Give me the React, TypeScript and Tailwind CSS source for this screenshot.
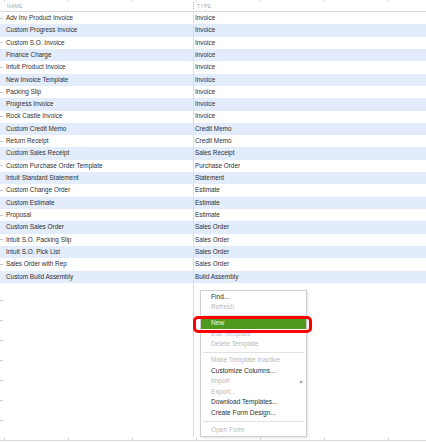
import React from "react";

interface FormTemplate {
  name: string;
  type: string;
}

const templates: FormTemplate[] = [
  { name: "Adv Inv Product Invoice", type: "Invoice" },
  { name: "Custom Progress Invoice", type: "Invoice" },
  { name: "Custom S.O. Invoice", type: "Invoice" },
  { name: "Finance Charge", type: "Invoice" },
  { name: "Intuit Product Invoice", type: "Invoice" },
  { name: "New Invoice Template", type: "Invoice" },
  { name: "Packing Slip", type: "Invoice" },
  { name: "Progress Invoice", type: "Invoice" },
  { name: "Rock Castle Invoice", type: "Invoice" },
  { name: "Custom Credit Memo", type: "Credit Memo" },
  { name: "Return Receipt", type: "Credit Memo" },
  { name: "Custom Sales Receipt", type: "Sales Receipt" },
  { name: "Custom Purchase Order Template", type: "Purchase Order" },
  { name: "Intuit Standard Statement", type: "Statement" },
  { name: "Custom Change Order", type: "Estimate" },
  { name: "Custom Estimate", type: "Estimate" },
  { name: "Proposal", type: "Estimate" },
  { name: "Custom Sales Order", type: "Sales Order" },
  { name: "Intuit S.O. Packing Slip", type: "Sales Order" },
  { name: "Intuit S.O. Pick List", type: "Sales Order" },
  { name: "Sales Order with Rep", type: "Sales Order" },
  { name: "Custom Build Assembly", type: "Build Assembly" },
];

type MenuEntry =
  | { kind: "item"; label: string; disabled?: boolean; active?: boolean; submenu?: boolean }
  | { kind: "sep"; tall?: boolean };

const menu: MenuEntry[] = [
  { kind: "item", label: "Find..." },
  { kind: "item", label: "Refresh", disabled: true },
  { kind: "sep" },
  { kind: "item", label: "New", active: true },
  { kind: "item", label: "Edit Template", disabled: true },
  { kind: "item", label: "Delete Template", disabled: true },
  { kind: "sep" },
  { kind: "item", label: "Make Template Inactive", disabled: true },
  { kind: "item", label: "Customize Columns..." },
  { kind: "item", label: "Import", disabled: true, submenu: true },
  { kind: "item", label: "Export...", disabled: true },
  { kind: "item", label: "Download Templates..." },
  { kind: "item", label: "Create Form Design..." },
  { kind: "sep", tall: true },
  { kind: "item", label: "Open Form", disabled: true },
];

const rulerTicks = [4, 68, 132, 196, 260, 324, 388];

const ContextMenu = () => (
  <div className="absolute left-[200px] top-[290px] w-[107px] h-[147px] bg-white border border-[#cfcfcf] shadow-[1px_1px_2px_rgba(0,0,0,0.12)] pt-[1px]">
    {menu.map((entry, i) =>
      entry.kind === "sep" ? (
        <div key={i} className={`flex items-center px-[2px] ${entry.tall ? "h-[6.5px]" : "h-[5.5px]"}`}>
          <div className="h-px w-full bg-[#e2e2e2]" />
        </div>
      ) : (
        <div
          key={i}
          className={`flex items-center justify-between h-[10.5px] pl-[10px] pr-[3px] text-[6.6px] leading-none ${
            entry.active
              ? "bg-[#4f9a1d] text-[#eef7e6]"
              : entry.disabled
              ? "text-[#b9b9b9]"
              : "text-[#2e2e2e]"
          }`}
        >
          <span>{entry.label}</span>
          {entry.submenu && <span className="text-[4px] text-[#999]">▶</span>}
        </div>
      )
    )}
  </div>
);

const App = () => {
  return (
    <div className="relative w-[426px] h-[442px] bg-white overflow-hidden font-['Liberation_Sans',Arial,sans-serif]">
      {/* top ruler */}
      <div className="absolute top-0 left-0 w-full h-[2px]">
        {rulerTicks.map((x) => (
          <div key={x} className="absolute top-0 w-px h-[2px] bg-[#d6d6d6]" style={{ left: x }} />
        ))}
      </div>

      {/* header */}
      <div className="flex h-[12px] border-b border-[#d9d9d9] text-[5px] tracking-[0.3px] text-[#a9a9a9]">
        <div className="w-[193px] pl-[7px] pt-[3px]">NAME</div>
        <div className="w-px my-[2px] border-l border-dotted border-[#b5b5b5]" />
        <div className="pl-[3px] pt-[3px]">TYPE</div>
      </div>

      {/* template rows */}
      <div className="flex flex-col">
        {templates.map((t, i) => (
          <div
            key={t.name}
            className={`flex h-[12.32px] items-center text-[6.4px] leading-none text-[#2f2f2f] ${
              i % 2 === 1 ? "bg-[#e2ecfa]" : "bg-white"
            }`}
          >
            <div className="flex items-center w-[193px]">
              <div className={`w-[3px] h-px ${i % 2 === 0 ? "bg-[#c8c8c8]" : ""}`} />
              <span className="pl-[3px]">{t.name}</span>
            </div>
            <div className="w-px self-stretch bg-[#dedede]" />
            <span className="pl-[1px]">{t.type}</span>
          </div>
        ))}
      </div>

      {/* empty area below the list */}
      <div className="flex h-[154px]">
        <div className="w-[193px] flex flex-col pt-[17px] gap-[19px]">
          {[0, 1, 2, 3, 4, 5, 6].map((n) => (
            <div key={n} className="w-[3px] h-px bg-[#d0d0d0]" />
          ))}
        </div>
        <div className="w-px bg-[#dcdcdc]" />
      </div>

      {/* bottom ruler */}
      <div className="relative h-[4px] border-b border-[#d6d6d6]">
        {rulerTicks.map((x) => (
          <div key={x} className="absolute bottom-0 w-px h-[2px] bg-[#cfcfcf]" style={{ left: x }} />
        ))}
      </div>

      <ContextMenu />

      {/* highlight around the New command */}
      <div className="absolute left-[193px] top-[316px] w-[119px] h-[17px] border-[3px] border-[#ff0000] rounded-[5px]" />
    </div>
  );
};

export default App;
